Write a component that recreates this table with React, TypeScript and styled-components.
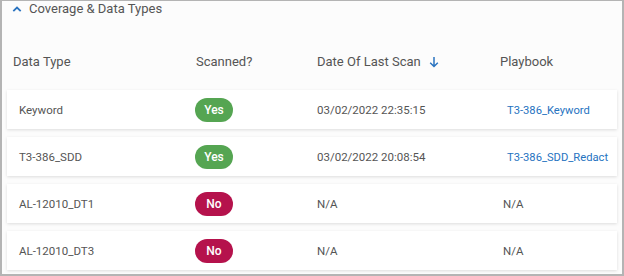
import React from "react";
import styled, { createGlobalStyle } from "styled-components";

const GlobalStyle = createGlobalStyle`
  html, body {
    margin: 0;
    padding: 0;
    background: #ffffff;
    font-family: Roboto, "Liberation Sans", Arial, sans-serif;
  }
`;

const Frame = styled.div`
  box-sizing: border-box;
  width: 624px;
  height: 276px;
  border: 2px solid #b4b4b4;
  border-top-width: 1px;
  background: #fcfcfc;
  overflow: hidden;
  display: flex;
  flex-direction: column;
`;

const SectionHeader = styled.div`
  display: flex;
  align-items: center;
  gap: 7px;
  height: 15px;
  padding: 0 0 0 10px;
  color: #555555;
  font-size: 13px;
`;

const Body = styled.div`
  display: flex;
  flex-direction: column;
  padding: 0 5px 0 5px;
`;

const HeadRow = styled.div`
  box-sizing: border-box;
  display: grid;
  grid-template-columns: 183px 121px 183px 1fr;
  align-items: end;
  height: 74px;
  padding: 0 6px 21px 6px;
  color: #555555;
  font-size: 13px;
`;

const HeadCell = styled.div`
  display: flex;
  align-items: center;
  gap: 8px;
`;

const Rows = styled.div`
  display: flex;
  flex-direction: column;
  gap: 8px;
`;

const Row = styled.div`
  display: grid;
  grid-template-columns: 176px 122px 186px 1fr;
  align-items: center;
  height: 39px;
  padding: 0 0 0 12px;
  background: #ffffff;
  box-shadow: 0 1px 3px rgba(0, 0, 0, 0.13);
  color: #555555;
  font-size: 11.5px;
`;

const Cell = styled.div<{ $indent?: number }>`
  padding-left: ${(p) => p.$indent ?? 0}px;
  white-space: nowrap;
`;

const Pill = styled.span<{ $yes: boolean }>`
  display: inline-flex;
  align-items: center;
  justify-content: center;
  height: 24px;
  min-width: 38px;
  padding: 0 8px;
  box-sizing: border-box;
  border-radius: 12px;
  background: ${(p) => (p.$yes ? "#55a552" : "#b5124c")};
  color: #ffffff;
  font-weight: 500;
  font-size: 12px;
`;

const PlaybookLink = styled.a`
  color: #2673bf;
  text-decoration: none;
  font-size: 11.2px;
`;

const Chevron = () => (
  <svg width="10" height="8" viewBox="0 0 10 8">
    <path d="M1.3 6.2 L5 2.5 L8.7 6.2" fill="none" stroke="#2b74c0" strokeWidth="1.8" />
  </svg>
);

const ArrowDown = () => (
  <svg width="10" height="12" viewBox="0 0 10 12">
    <path d="M5 1 V10.5 M1.2 6.8 L5 10.5 L8.8 6.8" fill="none" stroke="#2b74c0" strokeWidth="1.5" />
  </svg>
);

interface IRow {
  type: string;
  scanned: boolean;
  date: string;
  playbook?: string;
}

const data: IRow[] = [
  { type: "Keyword", scanned: true, date: "03/02/2022 22:35:15", playbook: "T3-386_Keyword" },
  { type: "T3-386_SDD", scanned: true, date: "03/02/2022 20:08:54", playbook: "T3-386_SDD_Redact" },
  { type: "AL-12010_DT1", scanned: false, date: "N/A" },
  { type: "AL-12010_DT3", scanned: false, date: "N/A" },
];

const App: React.FC = () => {
  return (
    <>
      <GlobalStyle />
      <Frame>
        <SectionHeader>
          <Chevron />
          Coverage &amp; Data Types
        </SectionHeader>
        <Body>
          <HeadRow>
            <HeadCell>Data Type</HeadCell>
            <HeadCell>Scanned?</HeadCell>
            <HeadCell>
              Date Of Last Scan <ArrowDown />
            </HeadCell>
            <HeadCell>Playbook</HeadCell>
          </HeadRow>
          <Rows>
            {data.map((row) => (
              <Row key={row.type}>
                <Cell>{row.type}</Cell>
                <Cell>
                  <Pill $yes={row.scanned}>{row.scanned ? "Yes" : "No"}</Pill>
                </Cell>
                <Cell>{row.date}</Cell>
                <Cell $indent={row.playbook ? 4 : 0}>
                  {row.playbook ? <PlaybookLink href="#">{row.playbook}</PlaybookLink> : "N/A"}
                </Cell>
              </Row>
            ))}
          </Rows>
        </Body>
      </Frame>
    </>
  );
};

export default App;
